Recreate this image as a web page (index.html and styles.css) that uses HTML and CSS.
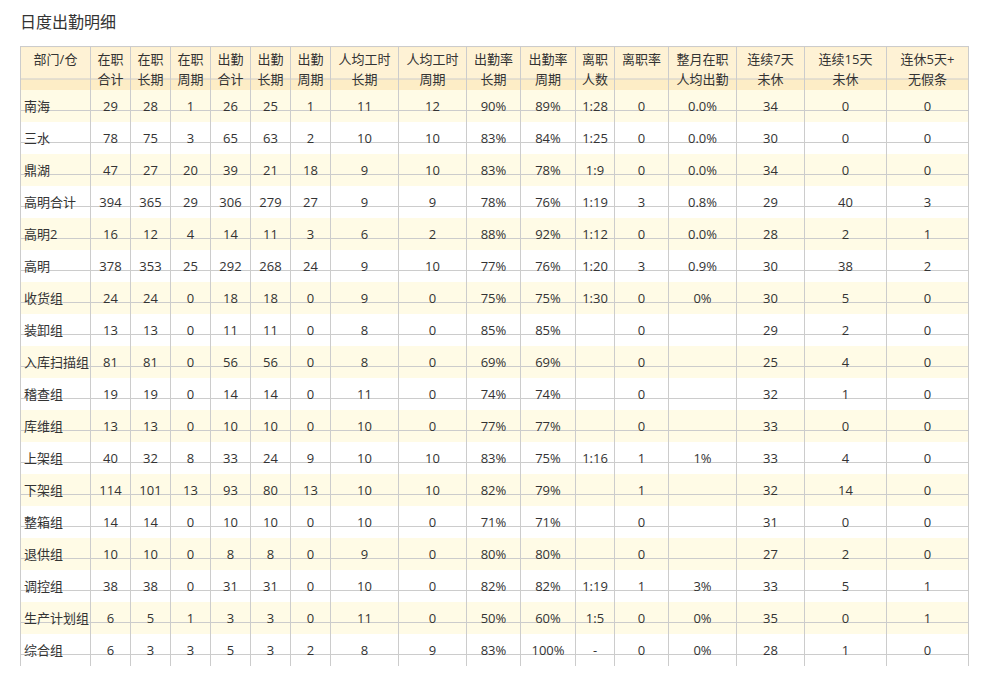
FILE: index.html
```html
<!DOCTYPE html>
<html lang="zh-CN">
<head>
<meta charset="utf-8">
<title>日度出勤明细</title>
<link rel="stylesheet" href="styles.css">
</head>
<body>
<h1 class="title">日度出勤明细</h1>
<table class="grid">
<colgroup>
<col class="w70"><col class="w40"><col class="w40"><col class="w40"><col class="w40"><col class="w40"><col class="w40">
<col class="w68"><col class="w68"><col class="w54"><col class="w55"><col class="w39"><col class="w54">
<col class="w68"><col class="w68"><col class="w82"><col class="w82">
</colgroup>
<thead>
<tr>
<th>部门/仓</th><th>在职<br>合计</th><th>在职<br>长期</th><th>在职<br>周期</th><th>出勤<br>合计</th><th>出勤<br>长期</th><th>出勤<br>周期</th>
<th>人均工时<br>长期</th><th>人均工时<br>周期</th><th>出勤率<br>长期</th><th>出勤率<br>周期</th><th>离职<br>人数</th><th>离职率</th>
<th>整月在职<br>人均出勤</th><th>连续7天<br>未休</th><th>连续15天<br>未休</th><th>连休5天+<br>无假条</th>
</tr>
</thead>
<tbody>
<tr><td>南海</td><td>29</td><td>28</td><td>1</td><td>26</td><td>25</td><td>1</td><td>11</td><td>12</td><td>90%</td><td>89%</td><td>1:28</td><td>0</td><td>0.0%</td><td>34</td><td>0</td><td>0</td></tr>
<tr><td>三水</td><td>78</td><td>75</td><td>3</td><td>65</td><td>63</td><td>2</td><td>10</td><td>10</td><td>83%</td><td>84%</td><td>1:25</td><td>0</td><td>0.0%</td><td>30</td><td>0</td><td>0</td></tr>
<tr><td>鼎湖</td><td>47</td><td>27</td><td>20</td><td>39</td><td>21</td><td>18</td><td>9</td><td>10</td><td>83%</td><td>78%</td><td>1:9</td><td>0</td><td>0.0%</td><td>34</td><td>0</td><td>0</td></tr>
<tr><td>高明合计</td><td>394</td><td>365</td><td>29</td><td>306</td><td>279</td><td>27</td><td>9</td><td>9</td><td>78%</td><td>76%</td><td>1:19</td><td>3</td><td>0.8%</td><td>29</td><td>40</td><td>3</td></tr>
<tr><td>高明2</td><td>16</td><td>12</td><td>4</td><td>14</td><td>11</td><td>3</td><td>6</td><td>2</td><td>88%</td><td>92%</td><td>1:12</td><td>0</td><td>0.0%</td><td>28</td><td>2</td><td>1</td></tr>
<tr><td>高明</td><td>378</td><td>353</td><td>25</td><td>292</td><td>268</td><td>24</td><td>9</td><td>10</td><td>77%</td><td>76%</td><td>1:20</td><td>3</td><td>0.9%</td><td>30</td><td>38</td><td>2</td></tr>
<tr><td>收货组</td><td>24</td><td>24</td><td>0</td><td>18</td><td>18</td><td>0</td><td>9</td><td>0</td><td>75%</td><td>75%</td><td>1:30</td><td>0</td><td>0%</td><td>30</td><td>5</td><td>0</td></tr>
<tr><td>装卸组</td><td>13</td><td>13</td><td>0</td><td>11</td><td>11</td><td>0</td><td>8</td><td>0</td><td>85%</td><td>85%</td><td></td><td>0</td><td></td><td>29</td><td>2</td><td>0</td></tr>
<tr><td>入库扫描组</td><td>81</td><td>81</td><td>0</td><td>56</td><td>56</td><td>0</td><td>8</td><td>0</td><td>69%</td><td>69%</td><td></td><td>0</td><td></td><td>25</td><td>4</td><td>0</td></tr>
<tr><td>稽查组</td><td>19</td><td>19</td><td>0</td><td>14</td><td>14</td><td>0</td><td>11</td><td>0</td><td>74%</td><td>74%</td><td></td><td>0</td><td></td><td>32</td><td>1</td><td>0</td></tr>
<tr><td>库维组</td><td>13</td><td>13</td><td>0</td><td>10</td><td>10</td><td>0</td><td>10</td><td>0</td><td>77%</td><td>77%</td><td></td><td>0</td><td></td><td>33</td><td>0</td><td>0</td></tr>
<tr><td>上架组</td><td>40</td><td>32</td><td>8</td><td>33</td><td>24</td><td>9</td><td>10</td><td>10</td><td>83%</td><td>75%</td><td>1:16</td><td>1</td><td>1%</td><td>33</td><td>4</td><td>0</td></tr>
<tr><td>下架组</td><td>114</td><td>101</td><td>13</td><td>93</td><td>80</td><td>13</td><td>10</td><td>10</td><td>82%</td><td>79%</td><td></td><td>1</td><td></td><td>32</td><td>14</td><td>0</td></tr>
<tr><td>整箱组</td><td>14</td><td>14</td><td>0</td><td>10</td><td>10</td><td>0</td><td>10</td><td>0</td><td>71%</td><td>71%</td><td></td><td>0</td><td></td><td>31</td><td>0</td><td>0</td></tr>
<tr><td>退供组</td><td>10</td><td>10</td><td>0</td><td>8</td><td>8</td><td>0</td><td>9</td><td>0</td><td>80%</td><td>80%</td><td></td><td>0</td><td></td><td>27</td><td>2</td><td>0</td></tr>
<tr><td>调控组</td><td>38</td><td>38</td><td>0</td><td>31</td><td>31</td><td>0</td><td>10</td><td>0</td><td>82%</td><td>82%</td><td>1:19</td><td>1</td><td>3%</td><td>33</td><td>5</td><td>1</td></tr>
<tr><td>生产计划组</td><td>6</td><td>5</td><td>1</td><td>3</td><td>3</td><td>0</td><td>11</td><td>0</td><td>50%</td><td>60%</td><td>1:5</td><td>0</td><td>0%</td><td>35</td><td>0</td><td>1</td></tr>
<tr><td>综合组</td><td>6</td><td>3</td><td>3</td><td>5</td><td>3</td><td>2</td><td>8</td><td>9</td><td>83%</td><td>100%</td><td>-</td><td>0</td><td>0%</td><td>28</td><td>1</td><td>0</td></tr>
</tbody>
</table>
</body>
</html>
```

FILE: styles.css
```css
html, body {
  background: #fff;
}
body {
  margin: 0;
  padding: 12px 20px 0;
  font-family: "Open Sans", "Noto Sans CJK SC", sans-serif;
  color: #333;
}
.title {
  margin: 0 0 14px;
  font-size: 16px;
  font-weight: normal;
  line-height: 20px;
  color: #333;
}
.grid {
  width: 948px;
  table-layout: fixed;
  border-collapse: collapse;
  border-top: 1px solid #ccc;
  font-size: 13px;
}
.w70 { width: 70px; }
.w40 { width: 40px; }
.w68 { width: 68px; }
.w54 { width: 54px; }
.w55 { width: 55px; }
.w39 { width: 39px; }
.w82 { width: 82px; }
.grid th {
  height: 41px;
  padding: 2px 0 0;
  vertical-align: top;
  font-weight: normal;
  line-height: 20px;
  color: #333;
  white-space: nowrap;
  border-left: 1px solid #ccc;
  border-right: 1px solid #ccc;
  background: linear-gradient(to bottom, #fef2d5 0, #fef2d5 31px, #ccc 31px, #ccc 32px, #fdedc6 32px, #fdedc6 100%);
}
.grid td {
  height: 32px;
  padding: 0;
  line-height: 32px;
  text-align: center;
  white-space: nowrap;
  overflow: hidden;
  border-left: 1px solid #ccc;
  border-right: 1px solid #ccc;
  background-color: #fff;
  background-image: linear-gradient(#ccc, #ccc);
  background-size: 100% 1px;
  background-position: 0 20px;
  background-repeat: no-repeat;
}
.grid tbody tr:nth-child(odd) td {
  background-color: #fffbe6;
}
.grid td:first-child {
  text-align: left;
  padding-left: 3px;
}
```
